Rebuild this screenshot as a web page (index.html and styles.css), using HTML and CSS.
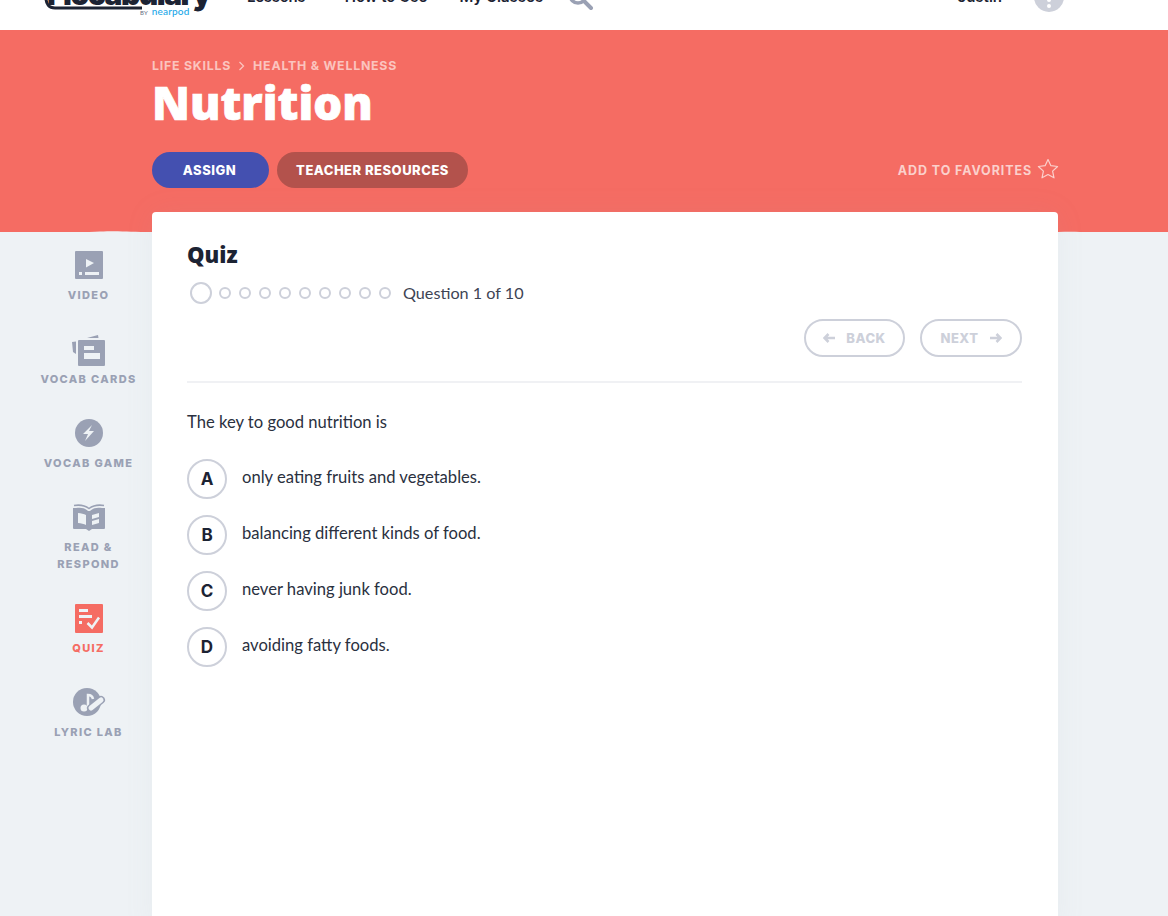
FILE: index.html
```html
<!doctype html>
<html lang="en">
  <head>
    <meta charset="UTF-8" />
    <title>Nutrition Quiz</title>
    <link rel="stylesheet" href="styles.css">
  </head>
  <body>
    <header class="topbar">
      <div class="logo">
        <span class="logo-word">Flocabulary</span>
        <svg class="logo-swoosh" viewBox="0 0 100 14" width="100" height="14"><path d="M2 1c0 6 3 10 9 10h87" fill="none" stroke="#1c2333" stroke-width="3"/></svg>
        <span class="logo-by"><small>BY</small> nearpod</span>
      </div>
      <nav class="topnav">
        <a class="nav-lessons">Lessons <i class="caret"></i></a>
        <a>How to Use</a>
        <a>My Classes</a>
        <svg class="search" viewBox="0 0 26 26" width="26" height="26"><circle cx="10" cy="7" r="8" fill="none" stroke="#9aa1b4" stroke-width="3.5"/><path d="M16 13l7 7" stroke="#9aa1b4" stroke-width="4" stroke-linecap="round"/></svg>
      </nav>
      <div class="user">
        <span class="user-name">Justin</span>
        <span class="user-menu"><b></b><b></b></span>
      </div>
    </header>

    <section class="hero">
      <div class="crumbs">
        <span>LIFE SKILLS</span>
        <svg viewBox="0 0 8 10" width="8" height="10"><path d="M1.5 1l4 4-4 4" fill="none" stroke="#fbc4bf" stroke-width="1.3"/></svg>
        <span>HEALTH &amp; WELLNESS</span>
      </div>
      <h1>Nutrition</h1>
      <div class="hero-actions">
        <a class="pill pill-assign">ASSIGN</a>
        <a class="pill pill-resources">TEACHER RESOURCES</a>
        <a class="favorite">
          ADD TO FAVORITES
          <svg viewBox="0 0 22 22" width="22" height="22"><path d="M11 1.5l2.9 6.2 6.7.8-5 4.6 1.4 6.7L11 16.5l-6 3.3 1.4-6.7-5-4.6 6.7-.8z" fill="none" stroke="#fbd0cc" stroke-width="1.2" stroke-linejoin="round"/></svg>
        </a>
      </div>
      <svg class="torn" viewBox="0 0 1168 4" width="1168" height="4" preserveAspectRatio="none"><path d="M0 2C40 3 80 2.500 100 1.500S130 2 152 2H1058C1080 1 1090 3 1110 3S1150 2 1168 2.500V4H0z" fill="#eef2f5"/></svg>
    </section>

    <div class="content">
      <aside class="sidebar">
        <a class="side-item">
          <svg viewBox="0 0 28 30" width="28" height="30"><path fill="#9aa1b4" d="M0 1a1 1 0 0 1 1-1h26a1 1 0 0 1 1 1v26a1 1 0 0 1-1 1H1a1 1 0 0 1-1-1z"/><path fill="#eef2f5" d="M11 8l8 4-8 4.500zM4 21h3v3H4zM10 21h14v3H10z"/></svg>
          <span>VIDEO</span>
        </a>
        <a class="side-item">
          <svg viewBox="0 0 34 30" width="34" height="30"><path fill="#9aa1b4" fill-rule="evenodd" d="M6 6a1 1 0 0 1 1-1h25a1 1 0 0 1 1 1v24a1 1 0 0 1-1 1H7a1 1 0 0 1-1-1zM12 11v4h10v-4zM12 18v6h16v-6z"/><path fill="#9aa1b4" d="M0 7l4-.5V19L1 17zM15 3l11-3 .5 3z"/></svg>
          <span>VOCAB CARDS</span>
        </a>
        <a class="side-item">
          <svg viewBox="0 0 28 30" width="28" height="30"><circle cx="14" cy="14" r="14" fill="#9aa1b4"/><path fill="#eef2f5" d="M17 6l-9 9h5l-3 7 9-10h-5z"/></svg>
          <span>VOCAB GAME</span>
        </a>
        <a class="side-item">
          <svg viewBox="0 0 32 30" width="32" height="30"><path fill="#9aa1b4" d="M0 5h3c5-1 9 0 12 3h2c3-3 7-4 12-3h3v20a1 1 0 0 1-1 1H19l-3 2-3-2H1a1 1 0 0 1-1-1z"/><path fill="none" stroke="#9aa1b4" stroke-width="1.500" d="M1 2.500c6-1 11 0 15 3 4-3 9-4 15-3"/><path fill="#eef2f5" d="M5 10c3 0 6 1 8 2v10c-2-1-5-2-8-2zM19 12l7-2v4l-7 2zM19 18l7-2v4l-7 2z"/></svg>
          <span>READ &amp;<br>RESPOND</span>
        </a>
        <a class="side-item side-item-active">
          <svg viewBox="0 0 28 30" width="28" height="30"><rect width="28" height="29" rx="1" fill="#f56c63"/><path fill="#eef2f5" d="M4 5h9v3H4zM4 11h13v3H4zM4 17h3v3H4z"/><path fill="none" stroke="#eef2f5" stroke-width="2.500" d="M12.500 19l4.500 4.500 7-10"/></svg>
          <span>QUIZ</span>
        </a>
        <a class="side-item">
          <svg viewBox="0 0 32 30" width="32" height="30"><circle cx="14" cy="14" r="14" fill="#9aa1b4"/><path fill="none" stroke="#eef2f5" stroke-width="2.500" d="M15 19V7c3 0 4.500 1.500 5 4"/><circle cx="11" cy="20" r="3.500" fill="#eef2f5"/><path stroke="#9aa1b4" stroke-width="8" stroke-linecap="round" d="M18 20l10-8"/><path stroke="#eef2f5" stroke-width="5" stroke-linecap="round" d="M18 20l10-8"/></svg>
          <span>LYRIC LAB</span>
        </a>
      </aside>

      <main class="card">
        <h2>Quiz</h2>
        <div class="progress">
          <i class="dot dot-current"></i>
          <i class="dot"></i><i class="dot"></i><i class="dot"></i>
          <i class="dot"></i><i class="dot"></i><i class="dot"></i>
          <i class="dot"></i><i class="dot"></i><i class="dot"></i>
          <span class="progress-label">Question 1 of 10</span>
        </div>
        <div class="quiz-nav">
          <a class="nav-btn">
            <svg viewBox="0 0 12 10" width="12" height="10"><path d="M5.500 1L1.500 5l4 4M2 5h10" fill="none" stroke="#cdd0da" stroke-width="2.600"/></svg>
            BACK
          </a>
          <a class="nav-btn nav-btn-next">
            NEXT
            <svg viewBox="0 0 12 10" width="12" height="10"><path d="M6.500 1l4 4-4 4M10 5H0" fill="none" stroke="#cdd0da" stroke-width="2.600"/></svg>
          </a>
        </div>
        <p class="question">The key to good nutrition is</p>
        <ul class="answers">
          <li><span class="letter">A</span><span class="answer-text">only eating fruits and vegetables.</span></li>
          <li><span class="letter">B</span><span class="answer-text">balancing different kinds of food.</span></li>
          <li><span class="letter">C</span><span class="answer-text">never having junk food.</span></li>
          <li><span class="letter">D</span><span class="answer-text">avoiding fatty foods.</span></li>
        </ul>
      </main>
    </div>
  </body>
</html>
```

FILE: styles.css
```css
html,
body {
  height: 916px;
  overflow: hidden;
}
body {
  margin: 0;
  background: #eef2f5;
  font-family: Lato, "Open Sans", sans-serif;
  color: #1c2333;
}
a {
  color: inherit;
  text-decoration: none;
}

/* top bar, scrolled so only its lower part shows */
.topbar {
  height: 30px;
  background: #fff;
  display: flex;
  align-items: flex-end;
  overflow: hidden;
  padding-left: 44px;
  padding-right: 104px;
}
.logo {
  width: 203px;
  height: 40px;
  flex: none;
  position: relative;
  margin-bottom: 6px;
}
.logo-word {
  display: block;
  font: 900 30px/31px Inter, sans-serif;
  letter-spacing: -1.500px;
  color: #1c2333;
  padding-left: 3px;
  margin-top: -5px;
  white-space: nowrap;
}
.logo-swoosh {
  position: absolute;
  left: 0;
  top: 13px;
}
.logo-by {
  position: absolute;
  left: 96px;
  top: 22px;
  font: 500 10px/10px Lato, sans-serif;
  letter-spacing: 0.2px;
  color: #1aa7e8;
}
.logo-by small {
  font-size: 6px;
  color: #6a7185;
  margin-right: 1px;
}
.topnav {
  display: flex;
  align-items: flex-end;
  gap: 32px;
  font: 600 15px/20px Inter, "Open Sans", sans-serif;
  margin-bottom: 23px;
}
.nav-lessons {
  letter-spacing: -0.3px;
}
.caret {
  display: inline-block;
  width: 0;
  height: 0;
  border: 2px solid transparent;
  border-top-color: #1c2333;
}
.search {
  margin-bottom: -7px;
  margin-left: -7px;
}
.user {
  margin-left: auto;
  display: flex;
  align-items: flex-end;
  gap: 32px;
}
.user-name {
  font: 600 15px/20px Inter, sans-serif;
  margin-bottom: 23px;
}
.user-menu {
  width: 30px;
  height: 30px;
  border-radius: 50%;
  background: #cdd0da;
  margin-bottom: 18px;
  display: flex;
  flex-direction: column;
  align-items: center;
  justify-content: flex-end;
  gap: 2px;
  padding-bottom: 4px;
  box-sizing: border-box;
}
.user-menu b {
  width: 4px;
  height: 4px;
  border-radius: 50%;
  background: #fff;
}

/* coral hero */
.hero {
  height: 202px;
  background: #f56c63;
  box-sizing: border-box;
  padding: 28px 109px 0 152px;
  position: relative;
}
.crumbs {
  display: flex;
  align-items: center;
  gap: 7px;
  height: 15px;
  font: 700 12.400px/15px Inter, sans-serif;
  letter-spacing: 0.75px;
  color: #fbc4bf;
}
.hero h1 {
  margin: 0;
  font: 800 45.500px/56px "Open Sans", sans-serif;
  -webkit-text-stroke: 0.7px #fff;
  color: #fff;
  height: 57px;
  padding-top: 1px;
}
.hero-actions {
  display: flex;
  align-items: center;
  gap: 8px;
  margin-top: 21px;
}
.pill {
  height: 36px;
  border-radius: 18px;
  display: flex;
  align-items: center;
  justify-content: center;
  font: 800 13px/16px Inter, sans-serif;
  letter-spacing: 0.5px;
  color: #fff;
}
.pill-assign {
  width: 117px;
  padding-right: 2px;
  box-sizing: border-box;
  background: #4450b0;
}
.pill-resources {
  width: 191px;
  background: #b3524c;
}
.favorite {
  margin-left: auto;
  display: flex;
  align-items: center;
  gap: 5px;
  padding-top: 1px;
  font: 700 12.500px/16px Inter, sans-serif;
  letter-spacing: 0.9px;
  color: #fbd0cc;
}
.favorite svg {
  margin-top: -3px;
}
.torn {
  position: absolute;
  left: 0;
  bottom: -2px;
  display: block;
}

/* sidebar + card */
.content {
  display: flex;
  align-items: flex-start;
  margin-top: -20px;
  position: relative;
}
.sidebar {
  width: 152px;
  flex: none;
  box-sizing: border-box;
  padding: 39px 0 0 25px;
}
.side-item {
  width: 127px;
  display: flex;
  flex-direction: column;
  align-items: center;
  text-align: center;
  font: 800 11px/17px Inter, sans-serif;
  letter-spacing: 1.350px;
  color: #9aa1b4;
  margin-bottom: 31px;
}
.side-item svg {
  display: block;
  overflow: visible;
  margin-bottom: 6px;
}
.side-item-active {
  color: #f56c63;
}
.card {
  width: 906px;
  height: 720px;
  background: #fff;
  border-radius: 4px 4px 0 0;
  box-shadow: 0 0 30px rgba(150, 160, 180, 0.08);
  box-sizing: border-box;
  padding: 26px 36px 0 35px;
}
.card h2 {
  margin: 0;
  font: 800 22px/32px "Open Sans", sans-serif;
  color: #1c2333;
}
.progress {
  display: flex;
  align-items: center;
  gap: 8px;
  height: 24px;
  margin-top: 11px;
  padding-left: 3px;
}
.dot {
  width: 12px;
  height: 12px;
  flex: none;
  box-sizing: border-box;
  border: 2px solid #cdd0da;
  border-radius: 50%;
}
.dot-current {
  width: 22px;
  height: 22px;
  margin-right: -1px;
}
.progress-label {
  margin-left: 4px;
  font-size: 16.200px;
  line-height: 20px;
  color: #3d4454;
}
.quiz-nav {
  display: flex;
  justify-content: flex-end;
  gap: 15px;
  margin-top: 14px;
  padding-bottom: 24px;
  border-bottom: 2px solid #f0f1f4;
}
.nav-btn {
  width: 101px;
  height: 38px;
  box-sizing: border-box;
  border: 2px solid #cdd0da;
  border-radius: 19px;
  display: flex;
  align-items: center;
  justify-content: center;
  gap: 11px;
  font: 800 13px/16px Inter, sans-serif;
  letter-spacing: 0.5px;
  color: #cdd0da;
}
.nav-btn-next {
  width: 102px;
}
.question {
  margin: 28px 0 0;
  font-size: 16.600px;
  line-height: 22px;
  color: #2a3040;
}
.answers {
  list-style: none;
  margin: 26px 0 0;
  padding: 0;
}
.answers li {
  display: flex;
  align-items: flex-start;
  gap: 15px;
  height: 40px;
  margin-bottom: 16px;
}
.letter {
  width: 40px;
  height: 40px;
  flex: none;
  box-sizing: border-box;
  border: 2px solid #cdd0da;
  border-radius: 50%;
  display: flex;
  align-items: center;
  justify-content: center;
  font: 700 17px/20px Inter, sans-serif;
  color: #1c2333;
}
.answer-text {
  font-size: 16.600px;
  line-height: 22px;
  padding-top: 7px;
  color: #2a3040;
}
```
